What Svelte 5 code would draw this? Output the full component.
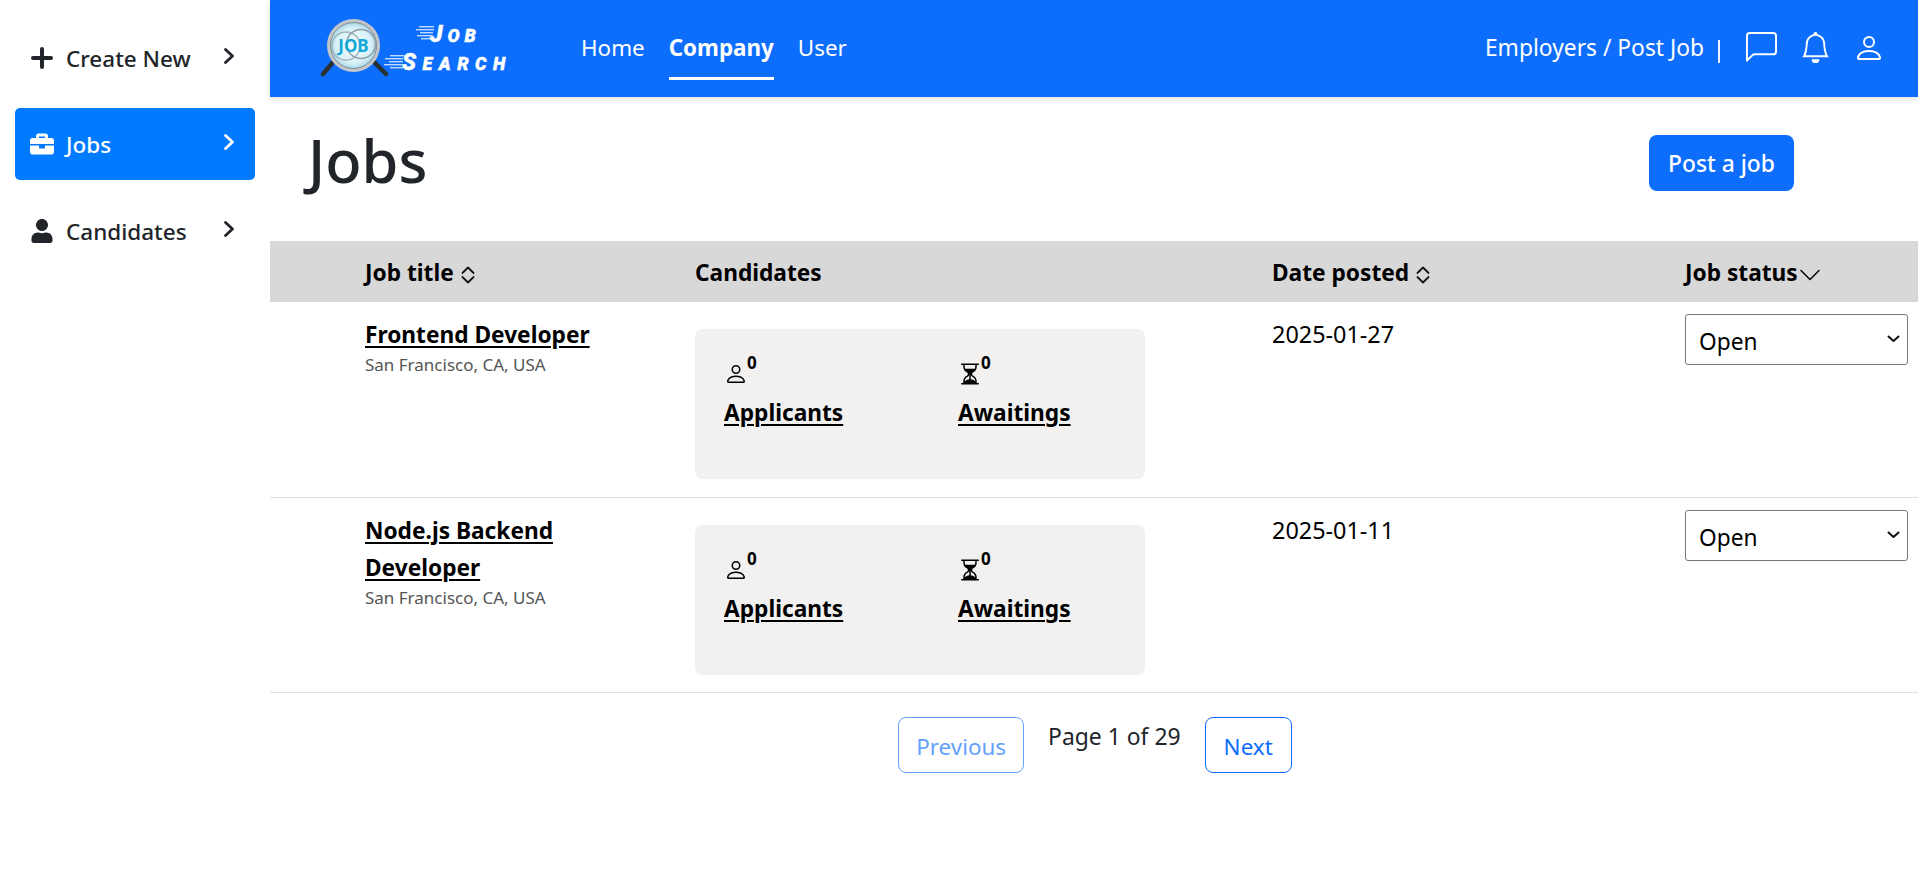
<script lang="ts">
    const jobs = [
        { title: "Frontend Developer", place: "San Francisco, CA, USA", date: "2025-01-27" },
        { title: "Node.js Backend Developer", place: "San Francisco, CA, USA", date: "2025-01-11" }
    ];
    const expand = "M3.646 9.146a.5.5 0 0 1 .708 0L8 12.793l3.646-3.647a.5.5 0 0 1 .708.708l-4 4a.5.5 0 0 1-.708 0l-4-4a.5.5 0 0 1 0-.708m0-2.292a.5.5 0 0 0 .708 0L8 3.207l3.646 3.647a.5.5 0 0 0 .708-.708l-4-4a.5.5 0 0 0-.708 0l-4 4a.5.5 0 0 0 0 .708";
    const person = "M8 8a3 3 0 1 0 0-6 3 3 0 0 0 0 6m2-3a2 2 0 1 1-4 0 2 2 0 0 1 4 0m4 8c0 1-1 1-1 1H3s-1 0-1-1 1-4 6-4 6 3 6 4m-1-.004c-.001-.246-.154-.986-.832-1.664C11.516 10.68 10.289 10 8 10s-3.516.68-4.168 1.332c-.678.678-.83 1.418-.832 1.664z";
    const hourglass = "M2.5 15a.5.5 0 1 1 0-1h1v-1a4.5 4.5 0 0 1 2.557-4.06c.29-.139.443-.377.443-.59v-.7c0-.213-.154-.451-.443-.59A4.5 4.5 0 0 1 3.5 3V2h-1a.5.5 0 0 1 0-1h11a.5.5 0 0 1 0 1h-1v1a4.5 4.5 0 0 1-2.557 4.06c-.29.139-.443.377-.443.59v.7c0 .213.154.451.443.59A4.5 4.5 0 0 1 12.5 13v1h1a.5.5 0 0 1 0 1zm2-13v1c0 .537.12 1.045.337 1.5h6.326c.216-.455.337-.963.337-1.5V2zm3 6.35c0 .701-.478 1.236-1.011 1.492A3.5 3.5 0 0 0 4.5 13s.866-1.299 3-1.48zm1 0v3.17c2.134.181 3 1.48 3 1.48a3.5 3.5 0 0 0-1.989-3.158C8.978 9.586 8.5 9.052 8.5 8.351z";
    // speed lines behind the logo words: [x, y, width]
    const jobLines = [[99, 7, 15], [96, 10, 18], [100, 13, 13], [97, 16, 16], [101, 19, 12]];
    const searchLines = [[70, 36, 14], [65, 39, 18], [69, 42, 14], [64, 45, 18], [70, 48, 13]];
</script>

{#snippet chevronRight()}
    <svg class="chev" viewBox="0 0 12 18" fill="none" stroke="currentColor" stroke-width="2.8" stroke-linecap="round" stroke-linejoin="round"><path d="M2.5 2.5 9.5 9l-7 6.5" /></svg>
{/snippet}

<div class="page">
    <aside class="sidebar">
        <a class="side-item" href="#new">
            <svg class="side-icon" viewBox="0 0 24 24" fill="none" stroke="currentColor" stroke-width="4" stroke-linecap="round"><path d="M12 3v18M3 12h18" /></svg>
            <span>Create New</span>
            {@render chevronRight()}
        </a>
        <a class="side-item active" href="#jobs">
            <svg class="side-icon" viewBox="0 0 512 512" fill="currentColor"><path d="M320 336c0 8.84-7.16 16-16 16h-96c-8.84 0-16-7.16-16-16v-48H0v144c0 25.6 22.4 48 48 48h416c25.6 0 48-22.4 48-48V288H320v48zm144-208h-80V80c0-25.6-22.4-48-48-48H176c-25.6 0-48 22.4-48 48v48H48c-25.6 0-48 22.4-48 48v80h512v-80c0-25.6-22.4-48-48-48zm-144 0H192V96h128v32z" /></svg>
            <span>Jobs</span>
            {@render chevronRight()}
        </a>
        <a class="side-item" href="#candidates">
            <svg class="side-icon" viewBox="0 0 448 512" fill="currentColor"><path d="M224 256c70.7 0 128-57.3 128-128S294.7 0 224 0 96 57.3 96 128s57.3 128 128 128zm89.6 32h-16.7c-22.2 10.3-46.9 16-72.9 16s-50.6-5.7-72.9-16h-16.7C60.2 288 0 348.2 0 422.4V464c0 26.5 21.5 48 48 48h352c26.5 0 48-21.5 48-48v-41.6c0-74.2-60.2-134.4-134.4-134.4z" /></svg>
            <span>Candidates</span>
            {@render chevronRight()}
        </a>
    </aside>

    <div class="main">
        <header class="topbar">
            <svg class="logo" viewBox="0 0 188 58">
                <defs>
                    <radialGradient id="lens" cx="50%" cy="50%" r="55%">
                        <stop offset="0" stop-color="#f7fcfe" />
                        <stop offset="0.7" stop-color="#d8f0f7" />
                        <stop offset="1" stop-color="#93cfe2" />
                    </radialGradient>
                </defs>
                <path d="M14 42 3 55" stroke="#2a2f33" stroke-width="4.5" stroke-linecap="round" />
                <path d="M53 42 66 55" stroke="#2a2f33" stroke-width="4.5" stroke-linecap="round" />
                <circle cx="33.5" cy="26.5" r="26.5" fill="#c2c6ca" />
                <circle cx="33.5" cy="26.5" r="23" fill="url(#lens)" stroke="#7e8a92" stroke-width="1" />
                <circle cx="26" cy="27" r="14" fill="none" stroke="#a3b3ba" stroke-width="1.4" />
                <circle cx="41" cy="25" r="14.5" fill="none" stroke="#8d9ea6" stroke-width="1.4" />
                <text x="33.5" y="33" class="logo-job">JOB</text>
                <g fill="#fff" opacity="0.75">
                    {#each [...jobLines, ...searchLines] as [x, y, w]}
                        <rect {x} {y} width={w} height="1.4" />
                    {/each}
                </g>
                <text x="110" y="23" class="logo-text"><tspan class="cap">J</tspan>OB</text>
                <text x="82" y="51" class="logo-text search"><tspan class="cap">S</tspan>EARCH</text>
            </svg>
            <nav class="nav">
                <a href="#home">Home</a>
                <a class="current" href="#company">Company</a>
                <a href="#user">User</a>
            </nav>
            <div class="top-right">
                <span class="employers">Employers / Post Job</span>
                <span class="sep"></span>
                <svg class="chat" viewBox="0 0 16 16" fill="currentColor"><path d="M14 1a1 1 0 0 1 1 1v8a1 1 0 0 1-1 1H4.414A2 2 0 0 0 3 11.586l-2 2V2a1 1 0 0 1 1-1zM2 0a2 2 0 0 0-2 2v12.793a.5.5 0 0 0 .854.353l2.853-2.853A1 1 0 0 1 4.414 12H14a2 2 0 0 0 2-2V2a2 2 0 0 0-2-2z" /></svg>
                <svg class="bell" viewBox="0 0 16 16" fill="currentColor"><path d="M8 16a2 2 0 0 0 2-2H6a2 2 0 0 0 2 2M8 1.918l-.797.161A4 4 0 0 0 4 6c0 .628-.134 2.197-.459 3.742-.16.767-.376 1.566-.663 2.258h10.244c-.287-.692-.502-1.49-.663-2.258C12.134 8.197 12 6.628 12 6a4 4 0 0 0-3.203-3.92zM14.22 12c.223.447.481.801.78 1H1c.299-.199.557-.553.78-1C2.68 10.2 3 6.88 3 6c0-2.42 1.72-4.44 4.005-4.901a1 1 0 1 1 1.99 0A5 5 0 0 1 13 6c0 .88.32 4.2 1.22 6" /></svg>
                <svg class="user" viewBox="0 0 16 16" fill="currentColor"><path d={person} /></svg>
            </div>
        </header>

        <div class="title-row">
            <h1>Jobs</h1>
            <button class="post">Post a job</button>
        </div>

        <table>
            <colgroup>
                <col class="c1" />
                <col class="c2" />
                <col class="c3" />
                <col class="c4" />
            </colgroup>
            <thead>
                <tr>
                    <th class="first">Job title<svg class="sort" viewBox="0 0 16 16" fill="currentColor" stroke="currentColor" stroke-width="0.4"><path d={expand} /></svg></th>
                    <th>Candidates</th>
                    <th>Date posted<svg class="sort" viewBox="0 0 16 16" fill="currentColor" stroke="currentColor" stroke-width="0.4"><path d={expand} /></svg></th>
                    <th>Job status<svg class="down" viewBox="0 0 16 16" fill="currentColor"><path fill-rule="evenodd" d="M1.646 4.646a.5.5 0 0 1 .708 0L8 10.293l5.646-5.647a.5.5 0 0 1 .708.708l-6 6a.5.5 0 0 1-.708 0l-6-6a.5.5 0 0 1 0-.708" /></svg></th>
                </tr>
            </thead>
            <tbody>
                {#each jobs as job}
                    <tr>
                        <td class="first">
                            <a class="job-link" href="#job">{job.title}</a>
                            <div class="place">{job.place}</div>
                        </td>
                        <td>
                            <div class="stats">
                                <div class="stat">
                                    <div class="stat-top"><svg viewBox="0 0 16 16" fill="currentColor"><path d={person} /></svg><sup>0</sup></div>
                                    <a href="#applicants">Applicants</a>
                                </div>
                                <div class="stat">
                                    <div class="stat-top"><svg viewBox="0 0 16 16" fill="currentColor"><path d={hourglass} /></svg><sup>0</sup></div>
                                    <a href="#awaitings">Awaitings</a>
                                </div>
                            </div>
                        </td>
                        <td class="date">{job.date}</td>
                        <td class="status">
                            <div class="select-wrap">
                                <select aria-label="Job status">
                                    <option>Open</option>
                                    <option>Closed</option>
                                </select>
                                <svg class="select-arrow" viewBox="0 0 13 8" fill="none" stroke="currentColor" stroke-width="2" stroke-linecap="round" stroke-linejoin="round"><path d="M1.5 1.5 6.5 6l5-4.5" /></svg>
                            </div>
                        </td>
                    </tr>
                {/each}
            </tbody>
        </table>

        <div class="pager">
            <button class="page-btn prev" disabled>Previous</button>
            <span class="page-text">Page 1 of 29</span>
            <button class="page-btn">Next</button>
        </div>
    </div>
</div>

<style>
    :global(body) {
        margin: 0;
        background: #fff;
        font-family: "Noto Sans", sans-serif;
        color: #212529;
    }
    .page {
        display: flex;
        min-height: 873px;
        overflow: hidden;
    }
    .sidebar {
        width: 270px;
        flex: none;
        box-sizing: border-box;
        padding: 22px 15px 0;
        display: flex;
        flex-direction: column;
        gap: 14px;
    }
    .side-item {
        height: 72px;
        display: flex;
        align-items: center;
        padding: 0 20px 0 15px;
        border-radius: 5px;
        font-size: 22.5px;
        font-weight: 500;
        color: #212529;
        text-decoration: none;
    }
    .side-item.active {
        background: #007bff;
        color: #fff;
        margin-bottom: 1px;
    }
    .side-icon {
        width: 24px;
        height: 24px;
        margin-right: 12px;
        flex: none;
    }
    .side-item span {
        flex: 1;
    }
    .chev {
        width: 12px;
        height: 18px;
        margin-top: -4px;
    }
    .main {
        flex: 1;
        min-width: 0;
    }
    .topbar {
        height: 97px;
        background: #0d6efd;
        color: #fff;
        display: flex;
        align-items: center;
        box-shadow: 0 2px 6px rgba(0, 0, 0, 0.12);
        padding: 0 33px 0 50px;
    }
    .logo {
        width: 188px;
        height: 58px;
        margin-top: -1px;
        overflow: visible;
    }
    .logo-job {
        font: 700 17px "Noto Sans", sans-serif;
        fill: #12a9d6;
        text-anchor: middle;
    }
    .logo-text {
        font: italic 900 18px Roboto, sans-serif;
        fill: #fff;
        stroke: #fff;
        stroke-width: 0.4px;
        letter-spacing: 5px;
    }
    .logo-text.search {
        letter-spacing: 6.5px;
    }
    .logo-text .cap {
        font-size: 23px;
    }
    .nav {
        display: flex;
        gap: 24px;
        margin-left: 73px;
        align-self: stretch;
    }
    .nav a {
        color: #fff;
        text-decoration: none;
        font-size: 22.4px;
        padding-top: 32px;
        box-sizing: border-box;
        height: 80px;
    }
    .nav a.current {
        font-weight: 700;
        border-bottom: 3px solid #fff;
    }
    .top-right {
        margin-left: auto;
        display: flex;
        align-items: center;
        padding-bottom: 2px;
    }
    .employers {
        font-size: 22.8px;
    }
    .sep {
        width: 2px;
        height: 23px;
        background: #f1f1ff;
        margin: 8px 26px 0 14px;
    }
    .chat {
        width: 31px;
        height: 31px;
        margin-right: 23px;
    }
    .bell {
        width: 31px;
        height: 31px;
        margin-right: 22px;
    }
    .user {
        width: 32px;
        height: 32px;
    }
    .title-row {
        height: 144px;
        display: flex;
        align-items: flex-start;
        justify-content: space-between;
        padding: 0 124px 0 38px;
    }
    h1 {
        margin: 27px 0 0;
        font-size: 59.5px;
        font-weight: 500;
        line-height: 1.2;
    }
    .post {
        margin-top: 38px;
        width: 145px;
        height: 56px;
        border: none;
        border-radius: 8px;
        background: #0d6efd;
        color: #fff;
        font: 500 22.8px "Noto Sans", sans-serif;
    }
    table {
        width: 100%;
        table-layout: fixed;
        border-collapse: collapse;
        color: #000;
    }
    .c1 {
        width: 417px;
    }
    .c2 {
        width: 577px;
    }
    .c3 {
        width: 413px;
    }
    thead tr {
        background: #d8d8d8;
        height: 61px;
    }
    th {
        text-align: left;
        font-size: 22.7px;
        font-weight: 700;
        padding: 2px 8px 0;
        white-space: nowrap;
    }
    .sort {
        width: 22px;
        height: 22px;
        margin-left: 3px;
        vertical-align: -5px;
    }
    .down {
        width: 24px;
        height: 24px;
        vertical-align: -6px;
    }
    th.first,
    td.first {
        padding-left: 95px;
        padding-right: 60px;
    }
    tbody tr {
        height: 195px;
        border-bottom: 1px solid #dee2e6;
    }
    td {
        vertical-align: top;
        padding: 14px 8px 0;
        font-size: 23.4px;
    }
    .job-link {
        color: #000;
        font-weight: 700;
        font-size: 22.7px;
        line-height: 36px;
        text-decoration-thickness: 2px;
        text-underline-offset: 3px;
    }
    td.first {
        line-height: 36px;
    }
    .place {
        font-size: 17px;
        line-height: 24px;
        color: #555;
    }
    .stats {
        background: #f2f1f0;
        border-radius: 8px;
        width: 450px;
        height: 150px;
        margin-top: 13px;
        box-sizing: border-box;
        padding: 24px 29px 0;
        display: flex;
    }
    .stat {
        width: 234px;
        flex: none;
    }
    .stat-top {
        height: 42px;
        display: flex;
        align-items: flex-start;
    }
    .stat-top svg {
        width: 24px;
        height: 24px;
        margin-top: 9px;
        color: #000;
    }
    .stat-top sup {
        font-size: 17px;
        line-height: 20px;
        font-weight: 700;
        vertical-align: baseline;
        margin-left: -1px;
    }
    .stat a {
        color: #000;
        font-weight: 700;
        font-size: 22.7px;
        line-height: 36px;
        text-decoration-thickness: 2px;
        text-underline-offset: 3px;
    }
    .date {
        line-height: 36px;
        padding-top: 14px;
    }
    .status {
        padding: 12px 10px 0 8px;
    }
    .select-wrap {
        position: relative;
    }
    select {
        appearance: none;
        display: block;
        width: 100%;
        height: 51px;
        border: 1px solid #767676;
        border-radius: 3px;
        background: #fff;
        color: #000;
        font: 22.7px "Noto Sans", sans-serif;
        padding: 4px 13px 0;
        box-sizing: border-box;
    }
    .select-arrow {
        position: absolute;
        right: 8px;
        top: 21px;
        width: 13px;
        height: 8px;
        color: #111;
        pointer-events: none;
    }
    .pager {
        display: flex;
        justify-content: center;
        align-items: flex-start;
        padding: 24px 0 0 2px;
    }
    .page-btn {
        height: 56px;
        padding: 3px 18px 0;
        background: #fff;
        border: 1px solid #0d6efd;
        border-radius: 8px;
        color: #0d6efd;
        font: 22.4px "Noto Sans", sans-serif;
    }
    .page-btn.prev {
        opacity: 0.65;
        padding: 3px 17px 0;
    }
    .page-text {
        font-size: 22.9px;
        line-height: 36px;
        margin: 2px 24px 0;
    }
</style>
